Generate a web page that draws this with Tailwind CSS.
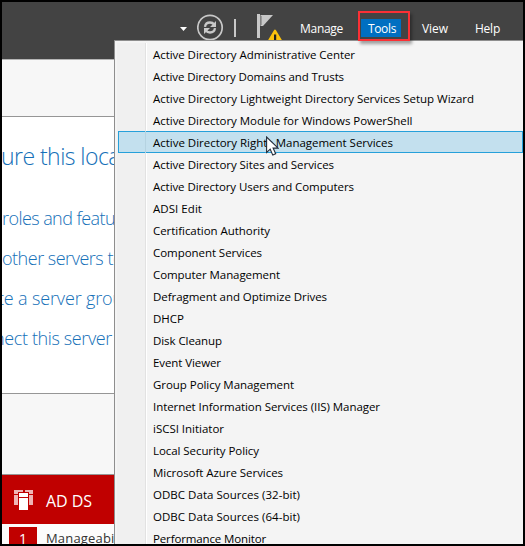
<!DOCTYPE html>
<html lang="en">
<head>
<meta charset="utf-8">
<title>Server Manager</title>
<script src="https://cdn.jsdelivr.net/npm/@tailwindcss/browser@4"></script>
</head>
<body class="h-[546px] w-[525px] overflow-hidden bg-black font-['Open_Sans','Noto_Sans',sans-serif]">
<div class="relative h-[546px] w-[525px] overflow-hidden border-2 border-black bg-white">
  <header class="h-[57px] bg-[#434343]">
    <nav class="flex h-[38px] items-start overflow-hidden pl-[178px] text-[12px] leading-[18px] text-white">
      <svg class="mt-[25px] h-[4px] w-[7px] shrink-0" viewBox="0 0 7 4"><path d="M0 0h7L3.500 4z" fill="#fff"/></svg>
      <svg class="mt-[12px] ml-[10px] h-[27px] w-[27px] shrink-0" viewBox="0 0 27 27" fill="none" stroke="#c8c8c8">
        <circle cx="13" cy="13.500" r="12.200" stroke-width="1.700"/>
        <path d="M8 12.800c.4-3 2.400-4.300 5-4.300 1.800 0 3.200.7 4.200 2M18 14.200c-.4 3-2.400 4.300-5 4.300-1.800 0-3.200-.7-4.200-2" stroke-width="2.300"/>
        <path d="M19 7v6h-6zM7 20v-6h6z" fill="#c8c8c8" stroke="none"/>
      </svg>
      <div class="mt-[17px] ml-[10px] h-[18px] w-[2px] shrink-0 bg-[#c8c8c8]"></div>
      <svg class="mt-[11px] ml-[20px] h-[27px] w-[28px] shrink-0" viewBox="0 0 28 27">
        <path d="M1 1h3v24H1z" fill="#c8c8c8"/><path d="M4.500 2H17L7 13H4.500z" fill="#c8c8c8"/>
        <path d="M5.300 3v9" stroke="#777" stroke-width=".7"/>
        <path d="M19 17.500 25 27.500H13z" fill="#fcc20c" stroke="#fcc20c" stroke-width="2" stroke-linejoin="round"/>
        <path d="M18 21.500h2.200v5.500H18z" fill="#222"/>
      </svg>
      <span class="fit mt-[18px] ml-[16px] w-[50px] shrink-0 whitespace-nowrap" data-w="43">Manage</span>
      <span class="mt-[17px] ml-[11px] h-[18px] w-[40px] shrink-0 bg-[#006fc1] pl-[7px]"><span class="fit relative top-px inline-block whitespace-nowrap" data-w="28">Tools</span></span>
      <span class="fit mt-[18px] ml-[21px] w-[53px] shrink-0 whitespace-nowrap" data-w="26">View</span>
      <span class="fit mt-[18px] shrink-0 whitespace-nowrap" data-w="25">Help</span>
    </nav>
  </header>

  <main class="w-[112px] overflow-hidden whitespace-nowrap">
    <div class="h-[58px] border-y border-t-[#b5b5b5] border-b-[#969696] bg-[#f7f7f7]"></div>
    <section class="h-[276px] pt-[23px] font-light text-[#1570b8]">
      <h1 class="h-[32px] text-[23px] leading-[32px]"><span class="fit -ml-px inline-block" data-w="119">ure this loca</span></h1>
      <ul class="mt-[26px] text-[18px] leading-[40px]">
        <li class="h-[40px]"><span class="fit inline-block" data-w="113">roles and featu</span></li>
        <li class="h-[40px]"><span class="fit inline-block" data-w="121">other servers to</span></li>
        <li class="h-[40px]"><span class="fit -ml-[4px] inline-block" data-w="125">te a server grou</span></li>
        <li class="h-[40px]"><span class="fit -ml-[8px] inline-block" data-w="118">nect this server</span></li>
      </ul>
    </section>
    <div class="h-[82px] border-y border-[#969696] bg-[#f7f7f7]"></div>
    <section class="bg-[#fcfcfc]">
      <div class="flex h-[49px] items-center bg-[#c00000] pl-[12px] text-white">
        <svg class="h-[21px] w-[20px]" viewBox="0 0 20 21">
          <path d="M0 1h9v3H5v12H0zM11 1h8v15h-4V4h-4z" fill="#efb5b5"/>
          <path d="M0 5.500h4M15 5.500h4" stroke="#c00000" stroke-width="1"/>
          <path d="M4 3h11v14H4z" fill="#c00000"/><path d="M5 4h9v17H5z" fill="#fff"/><path d="M5 8.500h9" stroke="#c00000"/>
        </svg>
        <span class="fit relative top-px ml-[12px] text-[16px]" data-w="46">AD DS</span>
      </div>
      <div class="flex h-[22px] pt-[3px] pl-[7px]">
        <span class="h-[19px] w-[28px] shrink-0 bg-[#c00000] text-center text-[14px] leading-[23px] text-white">1</span>
        <span class="fit ml-[9px] shrink-0 text-[13px] leading-[23px] text-[#333]" data-w="87">Manageability</span>
      </div>
    </section>
  </main>

  <div class="absolute top-[38px] left-[112px] h-[504px] w-[409px] overflow-hidden border-t border-l border-[#8e8e8e] bg-[#f4f4f4] pt-[2px] pl-[2px]">
    <div class="h-[510px] border-l-[28px] border-[#f0f0f0]">
      <ul id="tools" class="-ml-[27px] text-[11.500px] leading-[22px] text-black"></ul>
    </div>
  </div>

  <div class="absolute top-[9px] left-[356px] h-[30px] w-[52px] border-2 border-[#fb3035] shadow-[2px_3px_3px_rgba(0,0,0,0.35)]"></div>
  <svg class="absolute top-[134px] left-[264px] h-[21px] w-[13px]" viewBox="0 0 13 21"><path d="M.6 1v15.500l3.600-3.300 2.600 5.900 2.900-1.300-2.600-5.700h5z" fill="#fff" stroke="#222b38" stroke-width="1.100"/></svg>
</div>
<script>
const items = [
  ["Active Directory Administrative Center", 202], ["Active Directory Domains and Trusts", 191],
  ["Active Directory Lightweight Directory Services Setup Wizard", 321], ["Active Directory Module for Windows PowerShell", 259.500],
  ["Active Directory Rights Management Services", 240], ["Active Directory Sites and Services", 181],
  ["Active Directory Users and Computers", 201], ["ADSI Edit", 49], ["Certification Authority", 117],
  ["Component Services", 109], ["Computer Management", 127], ["Defragment and Optimize Drives", 174],
  ["DHCP", 31], ["Disk Cleanup", 69], ["Event Viewer", 68], ["Group Policy Management", 141],
  ["Internet Information Services (IIS) Manager", 227], ["iSCSI Initiator", 71], ["Local Security Policy", 106],
  ["Microsoft Azure Services", 130], ["ODBC Data Sources (32-bit)", 147], ["ODBC Data Sources (64-bit)", 147],
  ["Performance Monitor", 113]
];
document.getElementById("tools").innerHTML = items.map(([t, w], i) =>
  `<li class="flex h-[22px] border ${i === 4 ? "border-[#26a0da] bg-[#c3e0ee]" : "border-transparent"}"><span class="w-[27px] shrink-0 border-r ${i === 4 ? "border-[#b5d3e1]" : "border-[#e2e2e2] shadow-[1px_0_0_#fff]"} -my-px"></span><span class="fit ml-[7px] whitespace-nowrap leading-[21px]" data-w="${w}">${t}</span></li>`).join("");
// Tracks each label so that it takes its nominal width.
function fitLabels() {
  for (const el of document.querySelectorAll(".fit")) {
    el.style.letterSpacing = "0px";
    const range = document.createRange();
    range.selectNodeContents(el);
    const width = range.getBoundingClientRect().width;
    el.style.letterSpacing = (el.dataset.w - width) / el.textContent.length + "px";
  }
}
fitLabels();
window.addEventListener("load", fitLabels);
document.fonts.ready.then(fitLabels);
requestAnimationFrame(() => requestAnimationFrame(fitLabels));
</script>
</body>
</html>
